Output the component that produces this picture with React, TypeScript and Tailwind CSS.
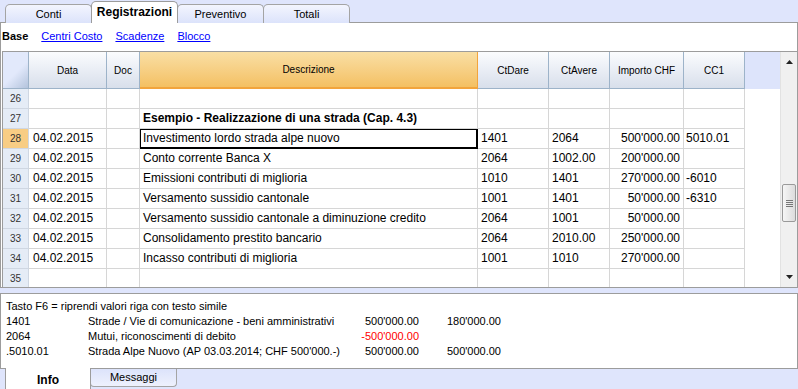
import React from "react";

type Row = {
  n: number;
  data?: string;
  desc?: string;
  dare?: string;
  avere?: string;
  imp?: string;
  cc1?: string;
  bold?: boolean;
  sel?: boolean;
};

const rows: Row[] = [
  { n: 26 },
  { n: 27, desc: "Esempio - Realizzazione di una strada (Cap. 4.3)", bold: true },
  { n: 28, data: "04.02.2015", desc: "Investimento lordo strada alpe nuovo", dare: "1401", avere: "2064", imp: "500'000.00", cc1: "5010.01", sel: true },
  { n: 29, data: "04.02.2015", desc: "Conto corrente Banca X", dare: "2064", avere: "1002.00", imp: "200'000.00" },
  { n: 30, data: "04.02.2015", desc: "Emissioni contributi di miglioria", dare: "1010", avere: "1401", imp: "270'000.00", cc1: "-6010" },
  { n: 31, data: "04.02.2015", desc: "Versamento sussidio cantonale", dare: "1001", avere: "1401", imp: "50'000.00", cc1: "-6310" },
  { n: 32, data: "04.02.2015", desc: "Versamento sussidio cantonale a diminuzione credito", dare: "2064", avere: "1001", imp: "50'000.00" },
  { n: 33, data: "04.02.2015", desc: "Consolidamento prestito bancario", dare: "2064", avere: "2010.00", imp: "250'000.00" },
  { n: 34, data: "04.02.2015", desc: "Incasso contributi di miglioria", dare: "1001", avere: "1010", imp: "270'000.00" },
  { n: 35 },
];

const topTabs = ["Conti", "Registrazioni", "Preventivo", "Totali"];

const gridCols = "grid grid-cols-[26px_78px_33px_338px_71px_61px_74px_61px_1fr]";
const cell = "border-r border-b border-[#d6d6d6] truncate whitespace-nowrap";
const head = "flex items-center justify-center border-r border-b border-[#9db3c9] bg-gradient-to-b from-[#fbfcfe] to-[#d8dfeb] text-[10px]";

function ScrollBar() {
  return (
    <div className="w-[17px] flex flex-col bg-[#f0f0f0] border-l border-[#e2e2e2]">
      <div className="h-[20px] flex items-center justify-center">
        <svg width="7" height="4" viewBox="0 0 7 4"><path d="M0 4L3.5 0L7 4Z" fill="#222" /></svg>
      </div>
      <div className="h-[112px]" />
      <div className="h-[38px] mx-[1px] rounded-[2px] border border-[#9a9a9a] bg-gradient-to-r from-[#f6f6f6] to-[#dcdcdc] flex flex-col items-center justify-center gap-[1px]">
        <div className="w-[7px] h-px bg-[#777]" />
        <div className="w-[7px] h-px bg-[#777]" />
        <div className="w-[7px] h-px bg-[#777]" />
        <div className="w-[7px] h-px bg-[#777]" />
      </div>
      <div className="flex-1" />
      <div className="h-[20px] flex items-center justify-center">
        <svg width="7" height="4" viewBox="0 0 7 4"><path d="M0 0L3.5 4L7 0Z" fill="#222" /></svg>
      </div>
    </div>
  );
}

export default function App() {
  return (
    <div className="w-[798px] h-[389px] overflow-hidden bg-[#dfe5fc] font-['Liberation_Sans',Arial,sans-serif] text-black">
      {/* top tabs */}
      <div className="h-[23px] flex items-end pl-[5px]">
        {topTabs.map((t, i) =>
          i === 1 ? (
            <div
              key={t}
              className="relative z-10 -ml-px w-[87px] h-[22px] flex items-center justify-center bg-white border-t border-l border-r border-[#9c9c9c] rounded-t-[5px] text-[12px] font-bold pb-[2px]"
            >
              {t}
            </div>
          ) : (
            <div
              key={t}
              className={`${i > 0 ? "-ml-px" : ""} w-[87px] h-[19px] flex items-center justify-center bg-gradient-to-b from-[#f3f5fe] to-[#dce3fb] border-t border-l border-r border-[#a4a4a4] rounded-t-[5px] text-[11px]`}
            >
              {t}
            </div>
          )
        )}
      </div>

      {/* main panel */}
      <div className="-mt-px h-[266px] flex flex-col bg-white border border-[#9c9c9c]">
        <div className="h-[28px] flex items-center gap-[13px] pl-[1px] pb-[2px] text-[11px]">
          <span className="font-bold">Base</span>
          <span className="text-[#0000ff] underline">Centri Costo</span>
          <span className="text-[#0000ff] underline">Scadenze</span>
          <span className="text-[#0000ff] underline">Blocco</span>
        </div>

        <div className="flex-1 min-h-0 ml-px flex overflow-hidden border-t border-l border-[#9c9c9c]">
          <div className="flex-1 flex flex-col">
            {/* header */}
            <div className={`${gridCols} h-[37px] shrink-0`}>
              <div className="border-r border-b border-[#9db3c9] bg-[linear-gradient(135deg,#e2e9fb_55%,#b3c3dc_100%)]" />
              <div className={head}>Data</div>
              <div className={head}>Doc</div>
              <div className="flex items-center justify-center border-r border-b-2 border-[#f2a43c] bg-gradient-to-b from-[#f9dfa4] to-[#f4c062] text-[10px]">
                Descrizione
              </div>
              <div className={head}>CtDare</div>
              <div className={head}>CtAvere</div>
              <div className={head}>Importo CHF</div>
              <div className={head}>CC1</div>
              <div className="bg-[#dde4fb]" />
            </div>

            {/* body */}
            {rows.map((r) => (
              <div key={r.n} className={`${gridCols} h-[20px] shrink-0 text-[12px] leading-[19px]`}>
                <div
                  className={`border-r border-b border-[#cfd7e2] text-center text-[10px] text-[#333] ${
                    r.sel ? "bg-[#f8cd84]" : "bg-[#e5ecf6]"
                  }`}
                >
                  {r.n}
                </div>
                <div className={`${cell} pl-[4px]`}>{r.data}</div>
                <div className={cell} />
                <div
                  className={`${cell} pl-[3px] ${r.bold ? "font-bold" : ""} ${
                    r.sel ? "shadow-[inset_0_0_0_1px_#000] border-r-black border-b-black" : ""
                  }`}
                >
                  {r.desc}
                </div>
                <div className={`${cell} pl-[3px]`}>{r.dare}</div>
                <div className={`${cell} pl-[3px]`}>{r.avere}</div>
                <div className={`${cell} pr-[3px] text-right`}>{r.imp}</div>
                <div className={`${cell} pl-[2px]`}>{r.cc1}</div>
                <div />
              </div>
            ))}
          </div>
          <ScrollBar />
        </div>
      </div>

      {/* info panel */}
      <div className="mt-[5px] h-[76px] bg-white border border-[#9c9c9c] pt-[5px] pl-[5px] text-[11px] leading-[15px] whitespace-nowrap">
        <div>Tasto F6 = riprendi valori riga con testo simile</div>
        <div className="grid grid-cols-[82px_250px_81px_82px]">
          <div>1401</div>
          <div>Strade / Vie di comunicazione - beni amministrativi</div>
          <div className="text-right">500'000.00</div>
          <div className="text-right">180'000.00</div>
          <div>2064</div>
          <div>Mutui, riconoscimenti di debito</div>
          <div className="text-right text-[#ff0000]">-500'000.00</div>
          <div />
          <div>.5010.01</div>
          <div>Strada Alpe Nuovo (AP 03.03.2014; CHF 500'000.-)</div>
          <div className="text-right">500'000.00</div>
          <div className="text-right">500'000.00</div>
        </div>
      </div>

      {/* bottom tabs */}
      <div className="flex items-start pl-[5px]">
        <div className="relative z-10 -mt-px w-[86px] h-[21px] flex items-center justify-center bg-white border-l border-r border-[#9c9c9c] text-[12px] font-bold pt-[2px]">
          Info
        </div>
        <div className="-ml-px w-[87px] h-[18px] flex items-center justify-center bg-gradient-to-b from-[#dce3fb] to-[#eef1fd] border-l border-r border-b border-[#a4a4a4] rounded-b-[4px] text-[11px]">
          Messaggi
        </div>
      </div>
    </div>
  );
}
